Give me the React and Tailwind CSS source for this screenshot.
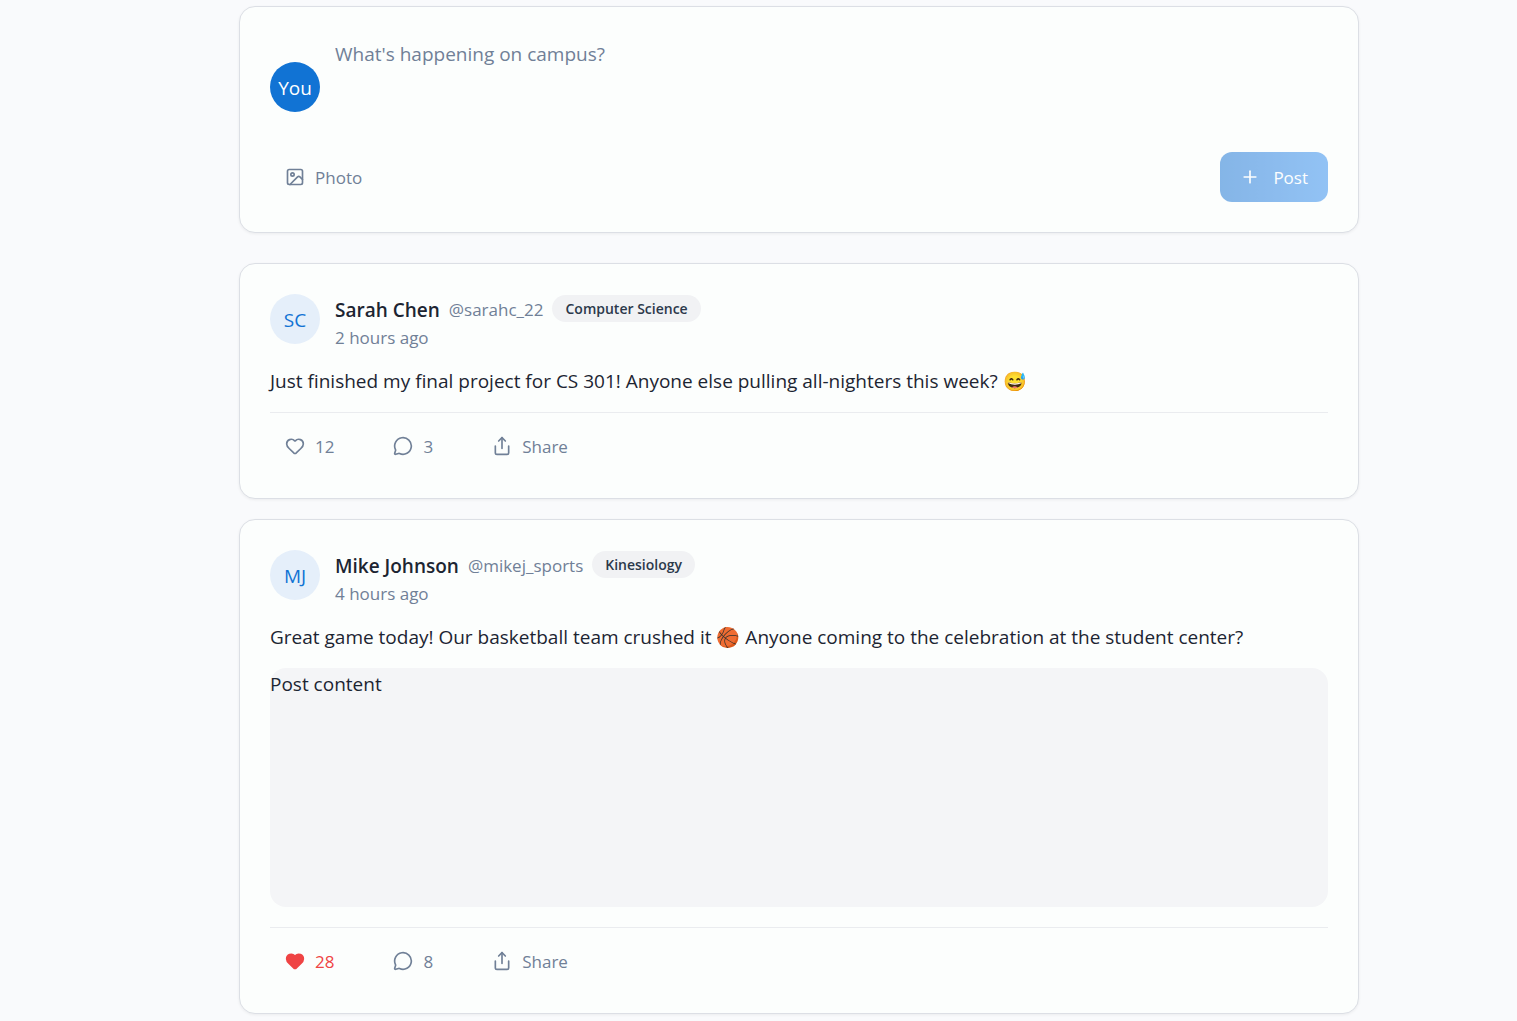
import React, { useState } from 'react';
import { Heart, Image, MessageCircle, Plus, Share } from 'lucide-react';

const posts = [
  {
    id: 1,
    initials: 'SC',
    name: 'Sarah Chen',
    handle: '@sarahc_22',
    major: 'Computer Science',
    time: '2 hours ago',
    content: 'Just finished my final project for CS 301! Anyone else pulling all-nighters this week? 😅',
    likes: 12,
    comments: 3,
    liked: false,
  },
  {
    id: 2,
    initials: 'MJ',
    name: 'Mike Johnson',
    handle: '@mikej_sports',
    major: 'Kinesiology',
    time: '4 hours ago',
    content: 'Great game today! Our basketball team crushed it 🏀 Anyone coming to the celebration at the student center?',
    hasImage: true,
    likes: 28,
    comments: 8,
    liked: true,
  },
];

const card = 'rounded-2xl border border-[#dcdfe5] bg-[#fcfefd] p-[30px] shadow-[0_1px_3px_rgba(0,0,0,0.06)]';
const action = 'flex h-[45px] items-center gap-[10px] px-[15px] text-[17px]';

function Composer() {
  const [text, setText] = useState('');

  return (
    <section className={card}>
      <div className="flex items-center gap-[15px]">
        <div className="flex size-[50px] shrink-0 items-center justify-center rounded-full bg-[#1173d4] pt-0.5 text-[19px] text-white">
          You
        </div>
        <textarea
          aria-label="What's happening on campus?"
          placeholder="What's happening on campus?"
          value={text}
          onChange={(e) => setText(e.target.value)}
          className="block h-[100px] flex-1 resize-none bg-transparent pt-px text-[19px] leading-8 outline-none placeholder:text-[#708097]"
        />
      </div>
      <div className="mt-[15px] flex items-center justify-between">
        <button type="button" className={`${action} text-[#708097]`}>
          <Image className="size-5" />
          <span className="pt-0.5">Photo</span>
        </button>
        <button
          type="button"
          disabled={!text.trim()}
          className="flex h-[50px] items-center gap-[13px] rounded-xl bg-linear-to-r from-[#0f6fd2] to-[#2a88ee] px-5 text-[17px] text-white disabled:opacity-50"
        >
          <Plus className="size-5" />
          <span className="pt-0.5">Post</span>
        </button>
      </div>
    </section>
  );
}

function Post({ post }) {
  const [liked, setLiked] = useState(post.liked);
  const likes = post.likes + Number(liked) - Number(post.liked);

  return (
    <article className={card}>
      <header className="flex gap-[15px]">
        <div className="flex size-[50px] shrink-0 items-center justify-center rounded-full bg-[#e5effa] pt-0.5 text-[19px] text-[#1173d4]">
          {post.initials}
        </div>
        <div>
          <div className="flex h-8 items-start gap-[9px]">
            <h3 className="text-[19px] leading-8 font-semibold">{post.name}</h3>
            <span className="text-[17px] leading-8 text-[#708097]">{post.handle}</span>
            <span className="mt-px rounded-full bg-[#f1f2f4] px-[13px] text-sm leading-[27px] font-semibold text-[#2c394b]">
              {post.major}
            </span>
          </div>
          <p className="text-[17px] leading-6 text-[#708097]">{post.time}</p>
        </div>
      </header>

      <p className="my-[15px] text-[19px] leading-8">{post.content}</p>

      {post.hasImage && (
        <div className="mb-5 h-[239px] rounded-2xl bg-[#f4f5f7] text-[19px] leading-8">Post content</div>
      )}

      <footer className="flex gap-[29px] border-t border-[#eaecef] pt-[10px]">
        <button
          type="button"
          aria-pressed={liked}
          onClick={() => setLiked(!liked)}
          className={`${action} ${liked ? 'text-[#ef4444]' : 'text-[#708097]'}`}
        >
          <Heart className="size-5" fill={liked ? 'currentColor' : 'none'} />
          <span className="pt-0.5">{likes}</span>
        </button>
        <button type="button" className={`${action} text-[#708097]`}>
          <MessageCircle className="size-5" />
          <span className="pt-0.5">{post.comments}</span>
        </button>
        <button type="button" className={`${action} text-[#708097]`}>
          <Share className="size-5" />
          <span className="pt-0.5">Share</span>
        </button>
      </footer>
    </article>
  );
}

export default function App() {
  return (
    <main className="min-h-screen bg-[#f9fafc] pt-[6px] pr-[158px] pb-[7px] pl-[239px] font-['Segoe_UI','Open_Sans',sans-serif] text-[#1c2532]">
      <Composer />
      <div className="mt-[30px] flex flex-col gap-5">
        {posts.map((post) => (
          <Post key={post.id} post={post} />
        ))}
      </div>
    </main>
  );
}
